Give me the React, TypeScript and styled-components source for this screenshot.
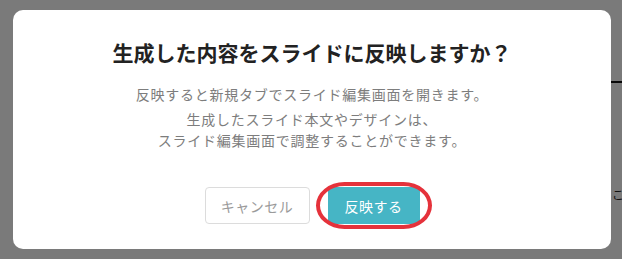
import React from "react";
import styled, { createGlobalStyle } from "styled-components";

const GlobalStyle = createGlobalStyle`
  html, body { margin: 0; padding: 0; }
  body {
    width: 622px;
    height: 259px;
    overflow: hidden;
    background: #ffffff;
    font-family: "Noto Sans CJK JP", "Noto Sans", sans-serif;
  }
`;

const Page = styled.div`
  width: 622px;
  height: 259px;
  display: flex;
  flex-direction: column;
  align-items: flex-end;
  box-sizing: border-box;
  padding-top: 81px;
`;

const Rule = styled.div`
  width: 12px;
  height: 2px;
  background: #111;
`;

const PageText = styled.div`
  margin-top: 104px;
  width: 10px;
  font-size: 12px;
  line-height: 16px;
  color: #222;
  white-space: nowrap;
`;

const Overlay = styled.div`
  position: fixed;
  inset: 0;
  background: rgba(0, 0, 0, 0.52);
  display: flex;
  box-sizing: border-box;
  padding: 10px 11px 10px 13px;
`;

const Dialog = styled.div`
  flex: 1;
  background: #ffffff;
  border-radius: 10px;
  display: flex;
  flex-direction: column;
  align-items: center;
  padding: 26px 0 24px;
`;

const Title = styled.h2`
  margin: 0;
  font-size: 21px;
  line-height: 32px;
  font-weight: 700;
  color: #222;
`;

const Body = styled.div`
  margin-top: 16px;
  display: flex;
  flex-direction: column;
  gap: 4px;
  align-items: center;
`;

const Para = styled.p`
  margin: 0;
  font-size: 14px;
  letter-spacing: 0.75px;
  line-height: 21px;
  color: #7d7d7d;
  text-align: center;
`;

const Actions = styled.div`
  margin-top: 36px;
  display: flex;
  gap: 18px;
`;

const Button = styled.button<{ $primary?: boolean }>`
  position: relative;
  height: 37px;
  box-sizing: border-box;
  border-radius: 4px;
  font-family: inherit;
  font-size: 14px;
  letter-spacing: 0.5px;
  cursor: pointer;
  padding: 0;
  width: ${(p) => (p.$primary ? "92px" : "105px")};
  border: 1px solid ${(p) => (p.$primary ? "#46b5c5" : "#dcdcdc")};
  background: ${(p) => (p.$primary ? "#46b5c5" : "#ffffff")};
  color: ${(p) => (p.$primary ? "#ffffff" : "#9a9a9a")};
`;

const Highlight = styled.span`
  position: absolute;
  left: -13px;
  right: -13px;
  top: -6px;
  bottom: -6px;
  border: 4px solid #e5323b;
  border-radius: 34px / 28px;
  pointer-events: none;
`;

export default function App() {
  return (
    <>
      <GlobalStyle />
      <Page>
        <Rule />
        <PageText>こ</PageText>
      </Page>
      <Overlay>
        <Dialog>
          <Title>生成した内容をスライドに反映しますか？</Title>
          <Body>
            <Para>反映すると新規タブでスライド編集画面を開きます。</Para>
            <Para>
              生成したスライド本文やデザインは、
              <br />
              スライド編集画面で調整することができます。
            </Para>
          </Body>
          <Actions>
            <Button>キャンセル</Button>
            <Button $primary>
              反映する
              <Highlight />
            </Button>
          </Actions>
        </Dialog>
      </Overlay>
    </>
  );
}
